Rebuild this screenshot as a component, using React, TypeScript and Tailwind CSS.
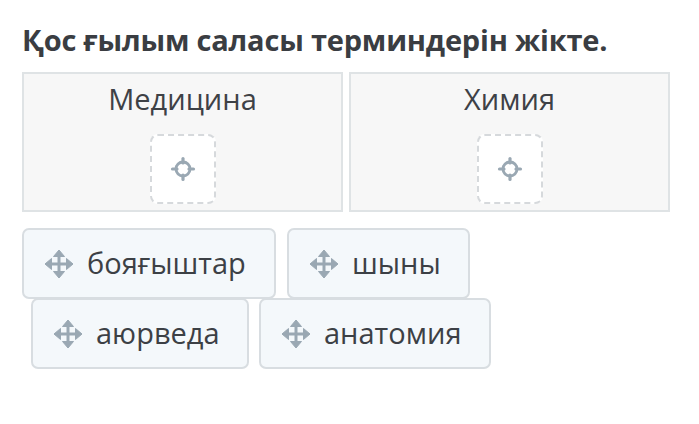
import React from 'react';

const FONT = { fontFamily: '"Open Sans", "Noto Sans", sans-serif' };

const MoveIcon: React.FC = () => (
  <svg width="30" height="30" viewBox="0 0 30 30" className="shrink-0">
    <g fill="#9aa8b3" stroke="#9aa8b3">
      <line x1="5" y1="15" x2="25" y2="15" strokeWidth="3" />
      <line x1="15" y1="5" x2="15" y2="25" strokeWidth="3" />
      <polygon points="15,1 20.5,7.5 9.5,7.5" strokeWidth="1" strokeLinejoin="round" />
      <polygon points="15,29 20.5,22.5 9.5,22.5" strokeWidth="1" strokeLinejoin="round" />
      <polygon points="1,15 7.5,9.5 7.5,20.5" strokeWidth="1" strokeLinejoin="round" />
      <polygon points="29,15 22.5,9.5 22.5,20.5" strokeWidth="1" strokeLinejoin="round" />
    </g>
  </svg>
);

const TargetIcon: React.FC = () => (
  <svg width="26" height="26" viewBox="0 0 26 26">
    <circle cx="13" cy="13" r="7" fill="none" stroke="#9aa8b3" strokeWidth="2.8" />
    <g stroke="#9aa8b3" strokeWidth="3.2" strokeLinecap="round">
      <line x1="13" y1="2.5" x2="13" y2="7" />
      <line x1="13" y1="19" x2="13" y2="23.5" />
      <line x1="2.5" y1="13" x2="7" y2="13" />
      <line x1="19" y1="13" x2="23.5" y2="13" />
    </g>
  </svg>
);

const Category: React.FC<{ title: string }> = ({ title }) => (
  <div className="w-[321px] h-[140px] border-2 border-[#dfe3e5] bg-[#f7f7f7] flex flex-col items-center">
    <div className="text-[29px] leading-[38px] mt-[6px] text-[#3e4146]">{title}</div>
    <div className="mt-[16px] w-[66px] h-[70px] rounded-[8px] border-2 border-dashed border-[#d6d9dc] bg-white flex items-center justify-center">
      <TargetIcon />
    </div>
  </div>
);

const Chip: React.FC<{ label: string; w: string }> = ({ label, w }) => (
  <div
    className={`${w} h-[71px] rounded-[7px] border-2 border-[#d8dde1] bg-[#f4f8fb] flex items-center pl-[20px] gap-[13px] text-[29px] text-[#3c4045]`}
  >
    <MoveIcon />
    <span className="leading-none pb-[2px]">{label}</span>
  </div>
);

export default function App() {
  return (
    <div className="w-[699px] h-[424px] bg-white pl-[22px] pt-[22px]" style={FONT}>
      <h1 className="text-[29px] leading-[36px] font-bold text-[#3a3d42] tracking-[-0.2px]">
        Қос ғылым саласы терминдерін жікте.
      </h1>
      <div className="mt-[14px] flex gap-[6px]">
        <Category title="Медицина" />
        <Category title="Химия" />
      </div>
      <div className="mt-[16px] flex gap-[11px]">
        <Chip label="бояғыштар" w="w-[254px]" />
        <Chip label="шыны" w="w-[183px]" />
      </div>
      <div className="-mt-[1px] ml-[9px] flex gap-[10px]">
        <Chip label="аюрведа" w="w-[218px]" />
        <Chip label="анатомия" w="w-[232px]" />
      </div>
    </div>
  );
}
